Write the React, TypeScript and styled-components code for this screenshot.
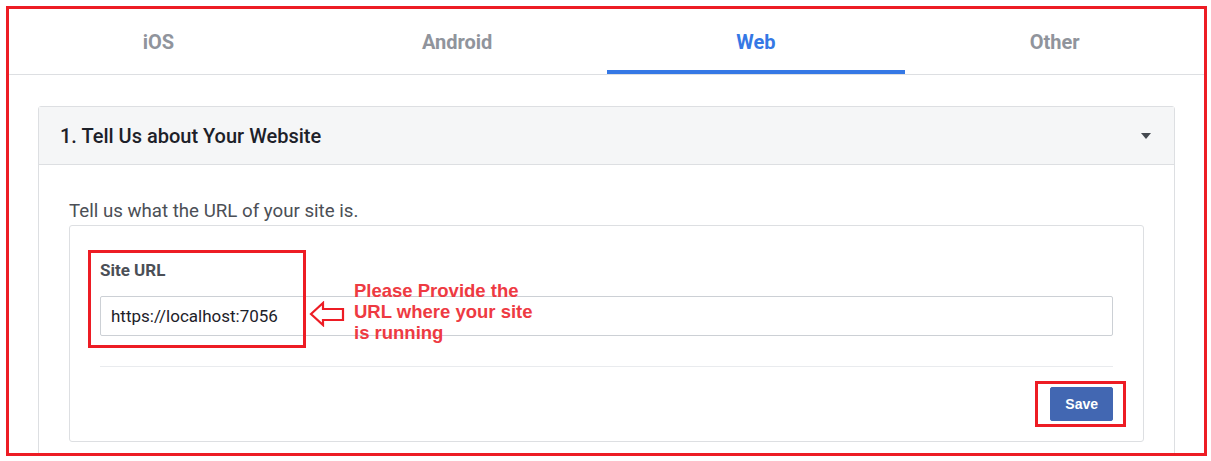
import React from 'react';
import styled, { createGlobalStyle } from 'styled-components';

const GlobalStyle = createGlobalStyle`
  body {
    margin: 0;
    background: #fff;
    font-family: Roboto, "Liberation Sans", Arial, sans-serif;
  }
  * { box-sizing: border-box; }
`

const Frame = styled.div`
  margin: 6px;
  width: 1201px;
  height: 450px;
  border: 3px solid #ed1c24;
  overflow: hidden;
`

const TabBar = styled.div`
  display: grid;
  grid-template-columns: repeat(4, 1fr);
  height: 66px;
  border-bottom: 1px solid #dddfe2;
`

const Tab = styled.div<{ $active?: boolean }>`
  display: flex;
  align-items: center;
  justify-content: center;
  padding-top: 4px;
  border-bottom: 4px solid ${p => (p.$active ? '#3578e5' : 'transparent')};
  font-size: 20px;
  font-weight: 700;
  color: ${p => (p.$active ? '#3578e5' : '#90949c')};
  cursor: pointer;
`

const Content = styled.div`
  padding: 31px 29px 0;
`

const Card = styled.div`
  border: 1px solid #dddfe2;
  border-radius: 3px;
`

const CardHeader = styled.div`
  display: flex;
  align-items: center;
  justify-content: space-between;
  height: 58px;
  padding: 0 23px 0 21px;
  background: #f5f6f7;
  border-bottom: 1px solid #dddfe2;
  font-size: 20px;
  font-weight: 500;
  color: #1d2129;
`

const Caret = styled.span`
  width: 0;
  height: 0;
  border-left: 5px solid transparent;
  border-right: 5px solid transparent;
  border-top: 6px solid #444950;
`

const CardBody = styled.div`
  padding: 35px 30px 40px;
`

const Intro = styled.div`
  font-size: 18.7px;
  line-height: 22px;
  color: #4b4f56;
  margin-bottom: 3px;
`

const FieldBox = styled.div`
  border: 1px solid #dddfe2;
  border-radius: 3px;
  padding: 34px 30px 20px;
`

const Field = styled.div`
  position: relative;
`

const Label = styled.div`
  font-size: 17px;
  line-height: 20px;
  font-weight: 700;
  color: #4b4f56;
  margin-bottom: 16px;
`

const Input = styled.input`
  display: block;
  width: 100%;
  height: 40px;
  padding: 0 10px;
  border: 1px solid #ccd0d5;
  border-radius: 2px;
  font-family: Roboto, "Liberation Sans", Arial, sans-serif;
  font-size: 17px;
  color: #1d2129;
  outline: 0;
`

const Footer = styled.div`
  display: flex;
  justify-content: flex-end;
  margin-top: 30px;
  padding-top: 20px;
  border-top: 1px solid #e9ebee;
`

const ButtonWrap = styled.div`
  position: relative;
`

const Button = styled.button`
  height: 34px;
  padding: 0 14px;
  border: 1px solid #4267b2;
  border-radius: 2px;
  background: #4267b2;
  color: #fff;
  font-family: "Liberation Sans", Arial, sans-serif;
  font-size: 14px;
  font-weight: 700;
  cursor: pointer;
`

// red markup drawn over the screenshot
const Highlight = styled.div<{ $l: number; $t: number; $w: number; $h: number }>`
  position: absolute;
  left: ${p => p.$l}px;
  top: ${p => p.$t}px;
  width: ${p => p.$w}px;
  height: ${p => p.$h}px;
  border: 3px solid #ed1c24;
  pointer-events: none;
`

const Note = styled.div`
  position: absolute;
  left: 254px;
  top: 20px;
  font-family: "Liberation Sans", Arial, sans-serif;
  font-size: 18.5px;
  line-height: 21px;
  font-weight: 700;
  color: #ee3a42;
  white-space: nowrap;
`

const Arrow = styled.svg`
  position: absolute;
  left: 209px;
  top: 41px;
`

const tabs = ['iOS', 'Android', 'Web', 'Other']

const App: React.FC = () => {
  const [active, setActive] = React.useState('Web')
  const [url, setUrl] = React.useState('https://localhost:7056')

  return (
    <>
      <GlobalStyle />
      <Frame>
        <TabBar>
          {tabs.map(t => (
            <Tab key={t} $active={t === active} onClick={() => setActive(t)}>
              {t}
            </Tab>
          ))}
        </TabBar>
        <Content>
          <Card>
            <CardHeader>
              1. Tell Us about Your Website
              <Caret />
            </CardHeader>
            <CardBody>
              <Intro>Tell us what the URL of your site is.</Intro>
              <FieldBox>
                <Field>
                  <Label>Site URL</Label>
                  <Input value={url} onChange={e => setUrl(e.target.value)} />
                  <Highlight $l={-12} $t={-10} $w={218} $h={98} />
                  <Arrow width="36" height="26" viewBox="0 0 36 26">
                    <path
                      d="M2 13 L14 2 L14 8 L34 8 L34 19 L14 19 L14 24 Z"
                      fill="none"
                      stroke="#ed1c24"
                      strokeWidth="2.2"
                      strokeLinejoin="miter"
                    />
                  </Arrow>
                  <Note>
                    Please Provide the
                    <br />
                    URL where your site
                    <br />
                    is running
                  </Note>
                </Field>
                <Footer>
                  <ButtonWrap>
                    <Button type="button">Save</Button>
                    <Highlight $l={-15} $t={-6} $w={91} $h={46} />
                  </ButtonWrap>
                </Footer>
              </FieldBox>
            </CardBody>
          </Card>
        </Content>
      </Frame>
    </>
  )
}

export default App;
